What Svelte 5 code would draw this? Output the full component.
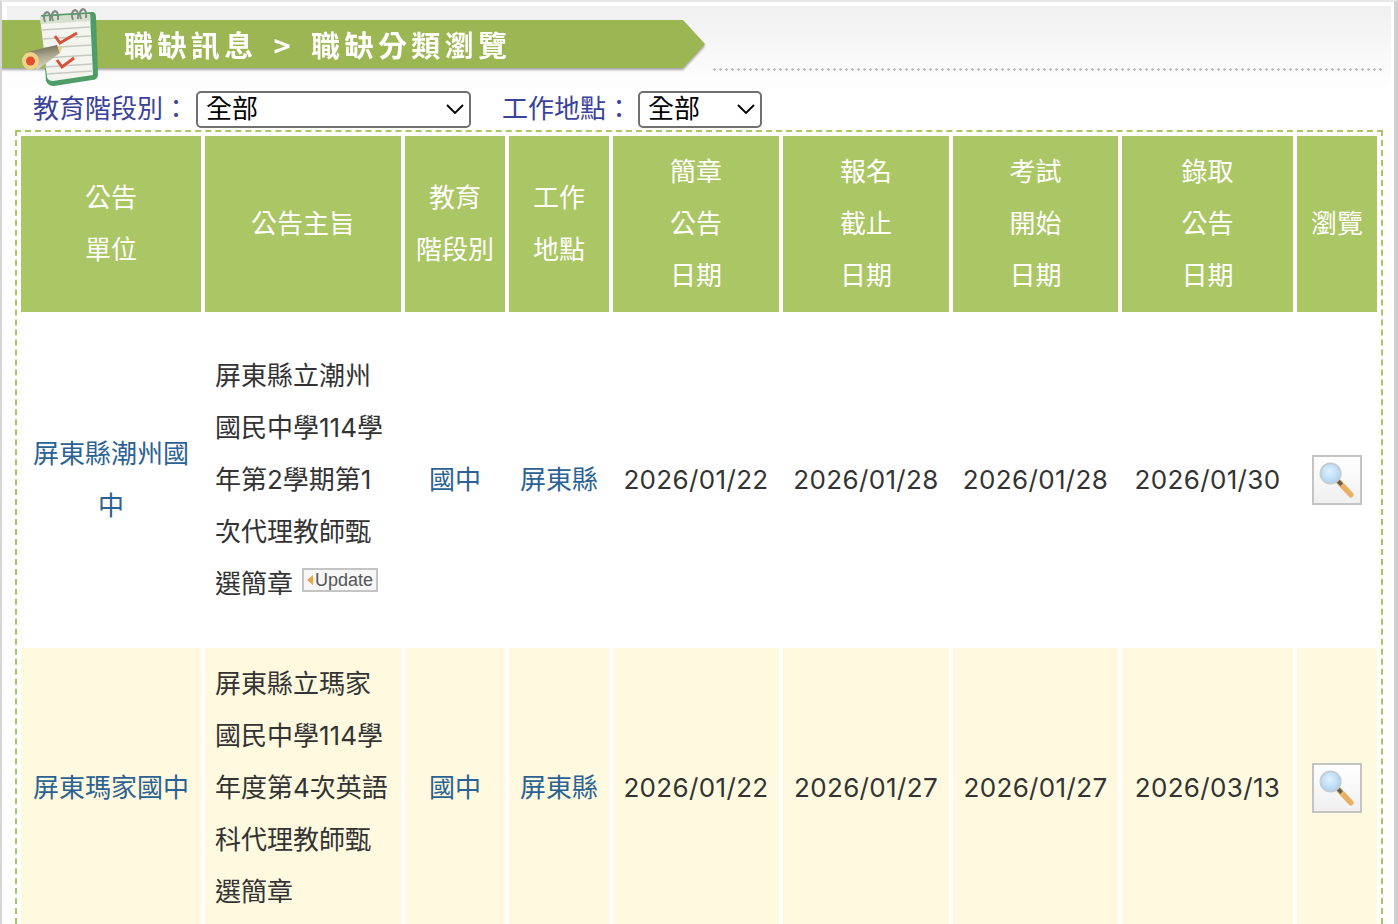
<script>
  const heads = [
    { lines: ['公告', '單位'] },
    { lines: ['公告主旨'] },
    { lines: ['教育', '階段別'] },
    { lines: ['工作', '地點'] },
    { lines: ['簡章', '公告', '日期'] },
    { lines: ['報名', '截止', '日期'] },
    { lines: ['考試', '開始', '日期'] },
    { lines: ['錄取', '公告', '日期'] },
    { lines: ['瀏覽'] }
  ];
  const rows = [
    {
      unit: ['屏東縣潮州國', '中'],
      subject: ['屏東縣立潮州', '國民中學114學', '年第2學期第1', '次代理教師甄', '選簡章'],
      update: true, level: '國中', place: '屏東縣',
      dates: ['2026/01/22', '2026/01/28', '2026/01/28', '2026/01/30']
    },
    {
      unit: ['屏東瑪家國中'],
      subject: ['屏東縣立瑪家', '國民中學114學', '年度第4次英語', '科代理教師甄', '選簡章'],
      update: false, level: '國中', place: '屏東縣',
      dates: ['2026/01/22', '2026/01/27', '2026/01/27', '2026/03/13']
    }
  ];
</script>

<div class="frame">
  <header class="head">
    <svg class="note" viewBox="0 0 100 92" width="100" height="92" aria-hidden="true">
      <defs>
        <linearGradient id="barrel" x1="0.400" y1="0" x2="0.600" y2="1">
          <stop offset="0" stop-color="#6b6653"/><stop offset="0.500" stop-color="#b3ad96"/><stop offset="1" stop-color="#e2ddc8"/>
        </linearGradient>
      </defs>
      <g transform="translate(2 0)">
        <path d="M29 15 L80 12 Q84 12 84 17 L86 74 Q86 80 80 80 L42 86 Q36 86 34 81 Z" fill="#4f9d66"/>
        <path d="M28 17 L78 14 L81 75 L41 81 Q36 81 35 77 Z" fill="#f4f5ef"/>
        <path d="M28 17 L78 14 L78.500 21 L29 24 Z" fill="#d5e0cf"/>
        <g stroke="#c6c9c2" stroke-width="1.300" fill="none">
          <path d="M30 30 L78 27M30 39 L79 36M31 48 L79 45M32 58 L80 55M33 67 L80 64M35 74 L80 71"/>
        </g>
        <g stroke="#7f8b80" stroke-width="2" fill="none">
          <path d="M33 22 Q30 14 35 12 Q39 13 38 21"/>
          <path d="M41 21 Q38 13 43 11 Q47 12 46 20"/>
          <path d="M61 20 Q58 12 63 10 Q67 11 66 19"/>
          <path d="M69 19 Q66 11 71 9 Q75 10 74 18"/>
        </g>
        <path d="M43 36 L48 43 L65 33" fill="none" stroke="#d8523a" stroke-width="3"/>
        <path d="M45 60 L50 67 L62 58" fill="none" stroke="#d8523a" stroke-width="3"/>
      </g>
      <path d="M17 52 L47 45 L50 53 L27 70 Z" fill="url(#barrel)"/>
      <path d="M47 45 L52 48 L50 53 Z" fill="#e9cf86"/>
      <ellipse cx="20.500" cy="61" rx="8.500" ry="9" fill="#eed48a"/>
      <circle cx="20.500" cy="61" r="4.500" fill="#e04f2b"/>
    </svg>
    <div class="bwrap"><div class="banner">職缺訊息 &gt; 職缺分類瀏覽</div></div>
    <div class="dots"></div>
  </header>

  <div class="filters">
    <label class="flabel" for="lv">教育階段別：</label>
    <span class="sel wide">
      <select id="lv"><option>全部</option></select>
      <svg viewBox="0 0 18 10" width="18" height="10" aria-hidden="true"><path d="M1 1 L9 9 L17 1" fill="none" stroke="#000" stroke-width="1.800"/></svg>
    </span>
    <label class="flabel second" for="pl">工作地點：</label>
    <span class="sel narrow">
      <select id="pl"><option>全部</option></select>
      <svg viewBox="0 0 18 10" width="18" height="10" aria-hidden="true"><path d="M1 1 L9 9 L17 1" fill="none" stroke="#000" stroke-width="1.800"/></svg>
    </span>
  </div>

  <table>
    <colgroup>
      <col class="c1" /><col class="c2" /><col class="c3" /><col class="c3" />
      <col class="c5" /><col class="c5" /><col class="c7" /><col class="c8" /><col class="c9" />
    </colgroup>
    <thead>
      <tr>
        {#each heads as h}
          <th>{#each h.lines as l, i}{#if i}<br />{/if}{l}{/each}</th>
        {/each}
      </tr>
    </thead>
    <tbody>
      {#each rows as r, idx}
        <tr class:first={idx === 0} class:alt={idx === 1}>
          <td class="link">{#each r.unit as l, i}{#if i}<br />{/if}{l}{/each}</td>
          <td class="subject">
            {#each r.subject as l, i}{#if i}<br />{/if}{l}{/each}{#if r.update}<span class="update"><i></i>Update</span>{/if}
          </td>
          <td class="link">{r.level}</td>
          <td class="link">{r.place}</td>
          {#each r.dates as d}<td class="date">{d}</td>{/each}
          <td class="act">
            <button class="view" aria-label="瀏覽">
              <svg viewBox="0 0 50 50" width="46" height="46" aria-hidden="true">
                <defs>
                  <radialGradient id="gl{idx}" cx="0.450" cy="0.400" r="0.600">
                    <stop offset="0" stop-color="#e2f2ff"/><stop offset="1" stop-color="#a9d3f5"/>
                  </radialGradient>
                </defs>
                <path d="M27 27 L40 41" stroke="#e9b064" stroke-width="6" stroke-linecap="round"/>
                <path d="M25 25 L30 30" stroke="#5f5f55" stroke-width="4"/>
                <circle cx="18" cy="18" r="11" fill="url(#gl{idx})" stroke="#c5ccd1" stroke-width="2"/>
              </svg>
            </button>
          </td>
        </tr>
      {/each}
    </tbody>
  </table>
</div>

<style>
  :global(html), :global(body) { margin: 0; height: 924px; overflow: hidden; background: #fff; }
  .frame {
    box-sizing: border-box;
    height: 924px;
    border-left: 2px solid #d6d6d6;
    border-right: 4px solid #d0d0d0;
    border-top: 2px solid #e8e8e8;
    font-family: Inter, "Noto Sans CJK TC", "Noto Sans", sans-serif;
    font-size: 26px;
    overflow: hidden;
    background: #fff;
  }
  .head {
    position: relative;
    height: 86px;
    margin: 4px 3px 0 5px;
    padding-top: 14px;
    box-sizing: border-box;
    background: linear-gradient(#f0f0f0, #fff);
  }
  .note { position: absolute; left: 3px; top: -6px; z-index: 2; filter: blur(0.4px); }
  .bwrap {
    margin-left: -7px;
    width: 705px;
    filter: drop-shadow(0 2px 1px rgba(0, 0, 0, 0.35));
  }
  .banner {
    height: 48px;
    box-sizing: border-box;
    padding-left: 124px;
    background: #9bb653;
    clip-path: polygon(0 0, 683px 0, 100% 50%, 683px 100%, 0 100%);
    color: #fff;
    font-family: "Noto Sans CJK TC", sans-serif;
    font-size: 29px;
    font-weight: 700;
    letter-spacing: 4.400px;
    word-spacing: 5px;
    line-height: 48px;
    white-space: nowrap;
  }
  .dots {
    height: 3px;
    margin: 0 9px 0 706px;
    background: radial-gradient(circle at 1.500px 1.500px, #bdbdbd 1.100px, transparent 1.500px) 0 0 / 6px 3px repeat-x;
  }
  .filters {
    display: flex;
    align-items: center;
    height: 36px;
    margin: -1px 0 3px 31px;
    color: #3a4299;
    line-height: 36px;
  }
  .flabel { width: 163px; white-space: nowrap; }
  .flabel.second { width: 136px; margin-left: 31px; }
  .sel { position: relative; display: block; height: 36px; }
  .sel.wide { width: 275px; }
  .sel.narrow { width: 124px; }
  .sel select {
    appearance: none;
    box-sizing: border-box;
    width: 100%;
    height: 37px;
    padding: 0 0 3px 8px;
    border: 2px solid #707070;
    border-radius: 5px;
    background: #fff;
    color: #000;
    font: inherit;
    line-height: 32px;
  }
  .sel svg { position: absolute; right: 7px; top: 13px; pointer-events: none; }
  table {
    margin-left: 13px;
    width: 1368px;
    table-layout: fixed;
    border-collapse: separate;
    border-spacing: 4px;
    border: 2px dashed #a9c663;
  }
  .c1 { width: 180px; }
  .c2 { width: 196px; }
  .c3 { width: 100px; }
  .c5 { width: 166px; }
  .c7 { width: 165px; }
  .c8 { width: 171px; }
  .c9 { width: 80px; }
  th {
    height: 176px;
    padding: 0;
    box-sizing: border-box;
    background: #abc664;
    color: #fff;
    font-weight: 400;
    line-height: 52px;
  }
  td {
    padding: 10px 0;
    color: #333;
    line-height: 52px;
    text-align: center;
  }
  tr.first td { height: 308px; }
  tr.alt td { background: #fef9df; }
  td.link { color: #2b6293; }
  td.subject { padding-left: 10px; padding-right: 0; text-align: left; white-space: nowrap; }
  td.date { letter-spacing: 0.350px; white-space: nowrap; }
  .update {
    display: inline-flex;
    align-items: center;
    box-sizing: border-box;
    vertical-align: 8px;
    width: 76px;
    height: 24px;
    margin-left: 9px;
    border: 2px solid #c4c4c4;
    background: #f7f7f7;
    color: #555;
    font-family: "Liberation Sans", sans-serif;
    font-size: 18px;
    line-height: 20px;
  }
  .update i {
    width: 0;
    height: 0;
    margin: 0 2px 0 3px;
    border: 5px solid transparent;
    border-left: 0;
    border-right: 6px solid #eda33e;
  }
  .view {
    display: block;
    box-sizing: border-box;
    width: 50px;
    height: 50px;
    margin: 0 auto;
    padding: 0;
    border: 2px solid #c4c4c4;
    background: linear-gradient(#fff, #f0f0f0);
  }
  .view svg { display: block; }
</style>
